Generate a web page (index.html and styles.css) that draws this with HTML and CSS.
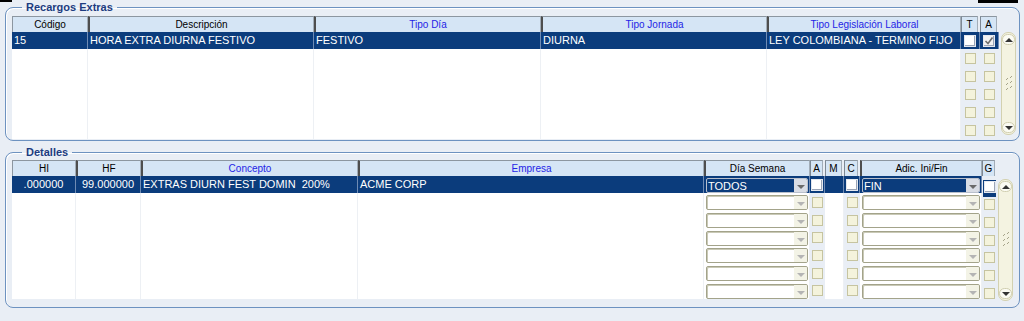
FILE: index.html
```html
<!DOCTYPE html>
<html>

<head>
    <meta charset="utf-8">
    <title>Recargos Extras</title>
    <link rel="stylesheet" href="styles.css">
</head>

<body>
    <div class="stub stub-left"></div>
    <div class="stub stub-right"></div>

    <fieldset class="panel panel-top">
        <legend>Recargos Extras</legend>
        <div class="block">
            <div class="grid grid-top">
                <div class="hd first">Código</div>
                <div class="hd">Descripción</div>
                <div class="hd blue">Tipo Día</div>
                <div class="hd blue">Tipo Jornada</div>
                <div class="hd blue">Tipo Legislación Laboral</div>
                <div class="hd sm">T</div>
                <div class="hd sm">A</div>

                <div class="sel">15</div>
                <div class="sel">HORA EXTRA DIURNA FESTIVO</div>
                <div class="sel">FESTIVO</div>
                <div class="sel">DIURNA</div>
                <div class="sel">LEY COLOMBIANA - TERMINO FIJO</div>
                <div class="sel k"><span class="chk-on"></span></div>
                <div class="sel k"><span class="chk-on checked">
                    <svg width="10" height="10" viewBox="0 0 10 10"><path d="M1.5 5 L4 7.5 L8.5 1.5" fill="none" stroke="#6e6e6e" stroke-width="1.6"/></svg>
                </span></div>

                <div class="w"></div><div class="w"></div><div class="w"></div><div class="w"></div><div class="w"></div>
                <div class="k"><span class="chk"></span></div><div class="k"><span class="chk"></span></div>
                <div class="w"></div><div class="w"></div><div class="w"></div><div class="w"></div><div class="w"></div>
                <div class="k"><span class="chk"></span></div><div class="k"><span class="chk"></span></div>
                <div class="w"></div><div class="w"></div><div class="w"></div><div class="w"></div><div class="w"></div>
                <div class="k"><span class="chk"></span></div><div class="k"><span class="chk"></span></div>
                <div class="w"></div><div class="w"></div><div class="w"></div><div class="w"></div><div class="w"></div>
                <div class="k"><span class="chk"></span></div><div class="k"><span class="chk"></span></div>
                <div class="w"></div><div class="w"></div><div class="w"></div><div class="w"></div><div class="w"></div>
                <div class="k"><span class="chk"></span></div><div class="k"><span class="chk"></span></div>
            </div>

            <div class="sb sb-top">
                <div class="sb-btn"><span class="tri-up"></span></div>
                <svg class="grip" width="10" height="20" viewBox="0 0 10 20">
                    <path d="M2 6 L4 4 M6 4 L8 2 M2 11 L4 9 M6 9 L8 7 M2 16 L4 14 M6 14 L8 12" stroke="#a6a48a" stroke-width="1"/>
                </svg>
                <div class="sb-btn"><span class="tri-down"></span></div>
            </div>
        </div>
    </fieldset>

    <fieldset class="panel panel-bottom">
        <legend>Detalles</legend>
        <div class="block">
            <div class="grid grid-bottom">
                <div class="hd first">HI</div>
                <div class="hd">HF</div>
                <div class="hd blue">Concepto</div>
                <div class="hd blue">Empresa</div>
                <div class="hd">Día Semana</div>
                <div class="hd sm">A</div>
                <div class="hd sm">M</div>
                <div class="hd sm">C</div>
                <div class="hd">Adic. Ini/Fin</div>
                <div class="hd sm">G</div>

                <div class="sel num">.000000</div>
                <div class="sel num">99.000000</div>
                <div class="sel">EXTRAS DIURN FEST DOMIN&nbsp; 200%</div>
                <div class="sel">ACME CORP</div>
                <div class="sel dcell"><div class="dd dd-sel"><span class="dd-text">TODOS</span><span class="dd-arrow"><span class="tri-down"></span></span></div></div>
                <div class="sel k"><span class="chk-on"></span></div>
                <div class="sel"></div>
                <div class="sel k"><span class="chk-on"></span></div>
                <div class="sel dcell"><div class="dd dd-sel"><span class="dd-text">FIN</span><span class="dd-arrow"><span class="tri-down"></span></span></div></div>
                <div class="gsel"><div class="gbox"><span class="chk-on"></span></div></div>

                <div class="w"></div><div class="w"></div><div class="w"></div><div class="w"></div>
                <div class="w dcell"><div class="dd"><span class="dd-text"></span><span class="dd-arrow"><span class="tri-down"></span></span></div></div>
                <div class="k"><span class="chk"></span></div>
                <div class="w"></div>
                <div class="k"><span class="chk"></span></div>
                <div class="w dcell"><div class="dd"><span class="dd-text"></span><span class="dd-arrow"><span class="tri-down"></span></span></div></div>
                <div class="k g"><span class="chk"></span></div>

                <div class="w"></div><div class="w"></div><div class="w"></div><div class="w"></div>
                <div class="w dcell"><div class="dd"><span class="dd-text"></span><span class="dd-arrow"><span class="tri-down"></span></span></div></div>
                <div class="k"><span class="chk"></span></div>
                <div class="w"></div>
                <div class="k"><span class="chk"></span></div>
                <div class="w dcell"><div class="dd"><span class="dd-text"></span><span class="dd-arrow"><span class="tri-down"></span></span></div></div>
                <div class="k g"><span class="chk"></span></div>

                <div class="w"></div><div class="w"></div><div class="w"></div><div class="w"></div>
                <div class="w dcell"><div class="dd"><span class="dd-text"></span><span class="dd-arrow"><span class="tri-down"></span></span></div></div>
                <div class="k"><span class="chk"></span></div>
                <div class="w"></div>
                <div class="k"><span class="chk"></span></div>
                <div class="w dcell"><div class="dd"><span class="dd-text"></span><span class="dd-arrow"><span class="tri-down"></span></span></div></div>
                <div class="k g"><span class="chk"></span></div>

                <div class="w"></div><div class="w"></div><div class="w"></div><div class="w"></div>
                <div class="w dcell"><div class="dd"><span class="dd-text"></span><span class="dd-arrow"><span class="tri-down"></span></span></div></div>
                <div class="k"><span class="chk"></span></div>
                <div class="w"></div>
                <div class="k"><span class="chk"></span></div>
                <div class="w dcell"><div class="dd"><span class="dd-text"></span><span class="dd-arrow"><span class="tri-down"></span></span></div></div>
                <div class="k g"><span class="chk"></span></div>

                <div class="w"></div><div class="w"></div><div class="w"></div><div class="w"></div>
                <div class="w dcell"><div class="dd"><span class="dd-text"></span><span class="dd-arrow"><span class="tri-down"></span></span></div></div>
                <div class="k"><span class="chk"></span></div>
                <div class="w"></div>
                <div class="k"><span class="chk"></span></div>
                <div class="w dcell"><div class="dd"><span class="dd-text"></span><span class="dd-arrow"><span class="tri-down"></span></span></div></div>
                <div class="k g"><span class="chk"></span></div>

                <div class="w"></div><div class="w"></div><div class="w"></div><div class="w"></div>
                <div class="w dcell"><div class="dd"><span class="dd-text"></span><span class="dd-arrow"><span class="tri-down"></span></span></div></div>
                <div class="k"><span class="chk"></span></div>
                <div class="w"></div>
                <div class="k"><span class="chk"></span></div>
                <div class="w dcell"><div class="dd"><span class="dd-text"></span><span class="dd-arrow"><span class="tri-down"></span></span></div></div>
                <div class="k g"><span class="chk"></span></div>
            </div>

            <div class="sb sb-bottom">
                <div class="sb-btn"><span class="tri-up"></span></div>
                <svg class="grip" width="10" height="20" viewBox="0 0 10 20">
                    <path d="M2 6 L4 4 M6 4 L8 2 M2 11 L4 9 M6 9 L8 7 M2 16 L4 14 M6 14 L8 12" stroke="#a6a48a" stroke-width="1"/>
                </svg>
                <div class="sb-btn"><span class="tri-down"></span></div>
            </div>
        </div>
    </fieldset>
</body>

</html>
```

FILE: styles.css
```css
* {
    box-sizing: border-box;
}

body {
    margin: 0;
    padding: 0;
    position: relative;
    background-color: #e9eef5;
    font-family: "Liberation Sans", Arial, sans-serif;
}

/* bits of another window cut off at the top edge */
.stub {
    position: absolute;
    top: 0;
    height: 3px;
    background-color: #000;
}

.stub-left {
    left: 0;
    width: 12px;
    height: 2px;
}

.stub-right {
    left: 978px;
    width: 40px;
}

.panel {
    margin: 0 4px 0 5px;
    padding: 2px 6px 1px 6px;
    border: 1px solid #6d92c0;
    border-radius: 8px;
    box-shadow: inset 1px 1px 0 #ffffff;
    min-width: 0;
}

.panel-bottom {
    margin-top: 4px;
    padding-top: 1px;
    padding-bottom: 6px;
}

.panel legend {
    margin-left: 10px;
    padding: 0 4px;
    font-size: 11px;
    line-height: 14px;
    font-weight: bold;
    color: #1d3c80;
}

.block {
    display: flex;
    align-items: flex-start;
}

.grid {
    display: grid;
}

.grid-top {
    grid-template-columns: 76px 226px 227px 226px 194px 19px 19px;
    grid-template-rows: 16px 17px repeat(5, 18px);
}

.grid-bottom {
    grid-template-columns: 64px 65px 217px 346px 106px 15px 19px 16px 122px 15px;
    grid-template-rows: 16px 17px 18px 18px 17px 18px 18px 17px;
}

.hd {
    background-color: #d5e5f5;
    border-top: 1px solid #8c96a0;
    border-left: 2px solid #4e4e4e;
    border-right: 1px solid #a2adb8;
    font-size: 10px;
    line-height: 15px;
    text-align: center;
    color: #000;
    white-space: nowrap;
    overflow: hidden;
}

.hd.first {
    border-left: 1px solid #8c96a0;
}

.hd.blue {
    color: #2424e6;
}

.hd.sm {
    border-left: 1px solid #7d8894;
    margin-right: 2px;
}

.sel {
    background-color: #0b3c7c;
    color: #ffffff;
    font-size: 11px;
    line-height: 17px;
    padding-left: 2px;
    border-right: 1px solid #6f8bb4;
    white-space: nowrap;
    overflow: hidden;
}

.sel.num {
    text-align: center;
    padding-left: 0;
}

.w {
    background-color: #ffffff;
    border-right: 1px solid #edf0f4;
}

.k {
    display: flex;
    justify-content: center;
    align-items: center;
    padding-left: 0;
}

.k.g {
    align-items: flex-start;
    padding-top: 6px;
}

.chk {
    display: block;
    width: 11px;
    height: 11px;
    background-color: #f4f3dc;
    border: 1px solid #c6c4a0;
}

.chk-on {
    display: flex;
    align-items: center;
    justify-content: center;
    width: 12px;
    height: 12px;
    background-color: #ffffff;
    border: 1px solid #e4e8ef;
    box-shadow: inset -1px -1px 0 #9aa4b6;
}

.chk-on.checked {
    background-color: #f2f2f2;
}

.gsel {
    padding: 4px 0 0 1px;
}

.gbox {
    width: 13px;
    height: 17px;
    padding: 1px;
    background-color: #0b3c7c;
}

.dcell {
    padding: 2px 1px 0 2px;
}

.dd {
    display: flex;
    height: 15px;
    border: 1px solid #a3a38a;
    border-radius: 2px;
    box-shadow: inset 1px 1px 0 #c9c9b6;
    background-color: #ffffff;
    overflow: hidden;
}

.dd-text {
    flex: 1;
    font-size: 11px;
    line-height: 15px;
    padding-left: 1px;
}

.dd-arrow {
    width: 13px;
    display: flex;
    align-items: center;
    justify-content: center;
    background-color: #f3f3e6;
}

.dd-arrow .tri-down {
    margin-top: 3px;
    border-top-color: #b4b4b4;
}

.dd-sel {
    height: 15px;
    margin-top: 0;
    border-color: #b9c0cc;
    box-shadow: none;
    background-color: #0b3c7c;
    color: #ffffff;
}

.dd-sel .dd-arrow {
    background-color: #d9dde5;
}

.dd-sel .dd-arrow .tri-down {
    border-top-color: #6a6a6a;
}

.sb {
    display: flex;
    flex-direction: column;
    justify-content: space-between;
    align-items: center;
    width: 15px;
    background-color: #f4f3e1;
    border: 1px solid #d3d1b0;
    border-radius: 7px;
}

.sb-top {
    margin: 16px 0 0 2px;
    height: 103px;
}

.sb-bottom {
    margin: 19px 0 0 1px;
    height: 122px;
    width: 17px;
}

.sb-btn {
    display: flex;
    align-items: center;
    justify-content: center;
    width: 13px;
    height: 11px;
    margin: 1px 0;
    border: 1px solid #d0ceb0;
    border-radius: 6px;
    background-color: #fbfbf3;
}

.tri-up {
    width: 0;
    height: 0;
    border-left: 4px solid transparent;
    border-right: 4px solid transparent;
    border-bottom: 4px solid #333333;
}

.tri-down {
    width: 0;
    height: 0;
    border-left: 4px solid transparent;
    border-right: 4px solid transparent;
    border-top: 4px solid #333333;
}
```
